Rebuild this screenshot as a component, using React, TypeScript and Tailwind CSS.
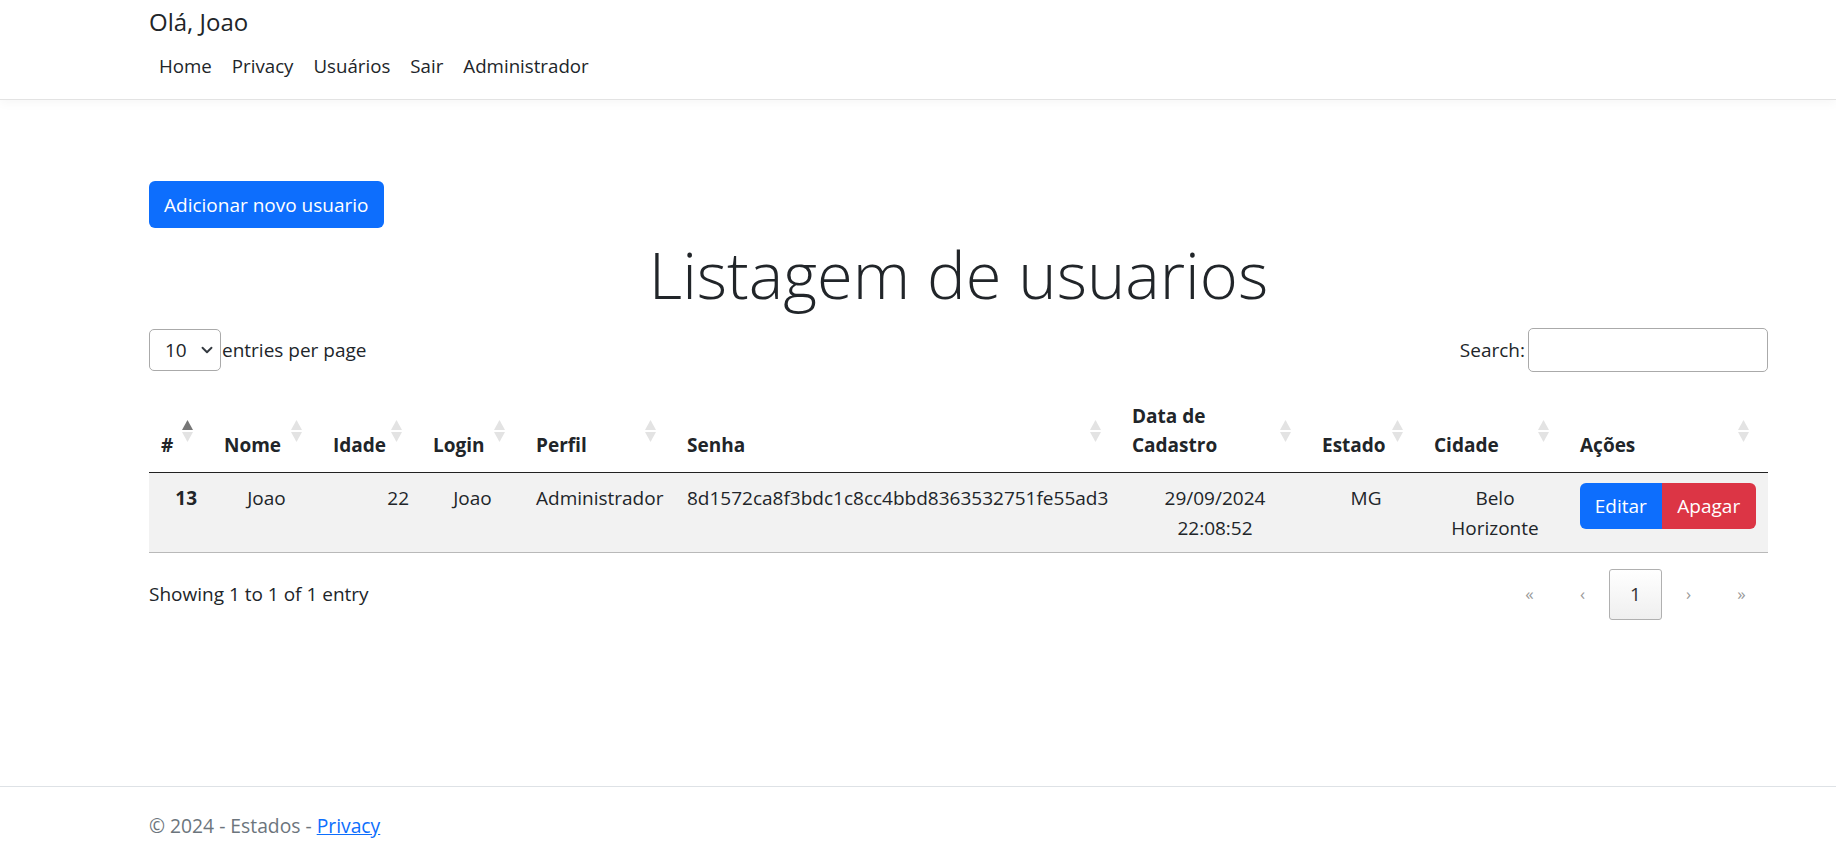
import React from "react";

const FONT = "font-['Open_Sans','Noto_Sans',sans-serif]";

function SortArrows({ active }: { active?: boolean }) {
  return (
    <span className="absolute right-[19px] top-1/2 -translate-y-1/2 flex flex-col items-center gap-[2px]">
      <svg width="11" height="10" viewBox="0 0 11 10">
        <polygon points="5.5,0 11,10 0,10" fill={active ? "#777777" : "#e3e3e3"} />
      </svg>
      <svg width="11" height="10" viewBox="0 0 11 10">
        <polygon points="0,0 11,0 5.5,10" fill="#e3e3e3" />
      </svg>
    </span>
  );
}

const cols = [
  { label: "#", w: "w-[63px]", active: true },
  { label: "Nome", w: "w-[109px]" },
  { label: "Idade", w: "w-[100px]" },
  { label: "Login", w: "w-[103px]" },
  { label: "Perfil", w: "w-[151px]" },
  { label: "Senha", w: "w-[445px]" },
  { label: "Data de Cadastro", w: "w-[190px]" },
  { label: "Estado", w: "w-[112px]" },
  { label: "Cidade", w: "w-[146px]" },
  { label: "Ações", w: "w-[200px]" },
];

export default function App() {
  return (
    <div className={`${FONT} min-h-[850px] bg-white text-[#212529] text-[19px]`}>
      {/* Header */}
      <header className="h-[100px] border-b border-[#e3e3e3] shadow-[0_3px_10px_rgba(0,0,0,0.04)]">
        <div className="pl-[149px]">
          <div className="pt-[7px] h-[37px] text-[24px] leading-[30px]">Olá, Joao</div>
          <nav className="mt-[14px] flex h-[30px] text-[18.7px] leading-[30px]">
            {["Home", "Privacy", "Usuários", "Sair", "Administrador"].map((l) => (
              <a key={l} className="px-[10px] text-[#212529]">
                {l}
              </a>
            ))}
          </nav>
        </div>
      </header>

      <main className="ml-[149px] w-[1619px]">
        <button className="mt-[81px] h-[47px] px-[15px] rounded-[6px] bg-[#0d6efd] text-white leading-[30px]">
          Adicionar novo usuario
        </button>

        <h1 className="mt-[5px] h-[84px] text-center text-[65px] font-light leading-[82px]">
          Listagem de usuarios
        </h1>

        {/* Controls */}
        <div className="mt-[11px] flex h-[44px] items-center justify-between">
          <div className="flex items-center">
            <div className="flex h-[42px] w-[72px] items-center justify-between rounded-[5px] border border-[#aaaaaa] pl-[15px] pr-[7px]">
              <span>10</span>
              <svg width="12" height="12" viewBox="0 0 16 16">
                <path d="M2 5l6 6 6-6" fill="none" stroke="#343a40" strokeWidth="2.5" strokeLinecap="round" strokeLinejoin="round" />
              </svg>
            </div>
            <span className="ml-[1px]">entries per page</span>
          </div>
          <div className="flex items-center">
            <span className="mr-[3px]">Search:</span>
            <div className="h-[44px] w-[240px] rounded-[5px] border border-[#aaaaaa]" />
          </div>
        </div>

        {/* Table */}
        <table className="mt-[19px] w-[1619px] table-fixed border-collapse">
          <thead>
            <tr className="border-b border-[#222222]">
              {cols.map((c) => (
                <th
                  key={c.label}
                  className={`${c.w} relative h-[81px] px-[12px] pb-[12px] text-left align-bottom font-bold leading-[29px]`}
                >
                  {c.label === "Data de Cadastro" ? (
                    <>
                      Data de
                      <br />
                      Cadastro
                    </>
                  ) : (
                    c.label
                  )}
                  <SortArrows active={c.active} />
                </th>
              ))}
            </tr>
          </thead>
          <tbody>
            <tr className="h-[80px] border-b border-[#b9b9b9] bg-[#f2f2f2] align-top leading-[30px]">
              <td className="pt-[10px] pr-[15px] text-right font-bold">13</td>
              <td className="px-[12px] pt-[10px] text-center">Joao</td>
              <td className="px-[12px] pt-[10px] text-right">22</td>
              <td className="px-[12px] pt-[10px] text-center">Joao</td>
              <td className="px-[12px] pt-[10px] whitespace-nowrap">Administrador</td>
              <td className="px-[12px] pt-[10px] whitespace-nowrap">8d1572ca8f3bdc1c8cc4bbd8363532751fe55ad3</td>
              <td className="px-[12px] pt-[10px] text-center">
                29/09/2024
                <br />
                22:08:52
              </td>
              <td className="px-[12px] pt-[10px] text-center">MG</td>
              <td className="px-[12px] pt-[10px] text-center">
                Belo
                <br />
                Horizonte
              </td>
              <td className="px-[12px] pt-[10px]">
                <div className="flex">
                  <button className="h-[46px] w-[82px] rounded-l-[6px] bg-[#0d6efd] text-white">Editar</button>
                  <button className="h-[46px] w-[95px] rounded-r-[6px] bg-[#dc3545] text-white">Apagar</button>
                </div>
              </td>
            </tr>
          </tbody>
        </table>

        {/* Info + pagination */}
        <div className="mt-[16px] flex h-[51px] items-center justify-between">
          <span>Showing 1 to 1 of 1 entry</span>
          <div className="flex">
            {["«", "‹", "1", "›", "»"].map((p) => (
              <span
                key={p}
                className={
                  p === "1"
                    ? "flex h-[51px] w-[53px] items-center justify-center rounded-[3px] border border-[#b0b0b0] bg-gradient-to-b from-white to-[#efefef] text-[#333333]"
                    : "flex h-[51px] w-[53px] items-center justify-center text-[#9a9a9a] text-[17px]"
                }
              >
                {p}
              </span>
            ))}
          </div>
        </div>
      </main>

      {/* Footer */}
      <footer className="mt-[166px] border-t border-[#dee2e6]">
        <div className="pl-[149px] pt-[24px] text-[19.3px] leading-[30px] text-[#6c757d]">
          © 2024 - Estados - <a className="text-[#0d6efd] underline">Privacy</a>
        </div>
      </footer>
    </div>
  );
}
